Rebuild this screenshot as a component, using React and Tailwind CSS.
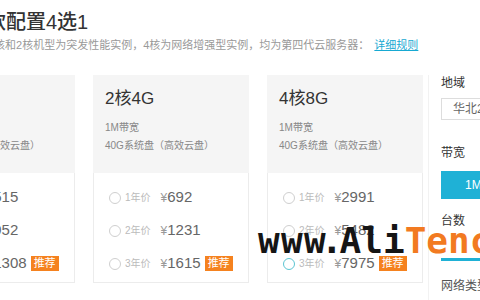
import React from 'react'

const cards = [
  { name: '1核2G', prices: ['515', '952', '1308'] },
  { name: '2核4G', prices: ['692', '1231', '1615'] },
  { name: '4核8G', prices: ['2991', '5482', '7975'], active: 2 },
]

const years = ['1年价', '2年价', '3年价']

const Card = ({ card }) => {
  return (
    <div className='w-[156px] shrink-0 flex flex-col'>
      <div className='bg-[#f5f5f5] h-[98px] px-[12px] pt-[12px]'>
        <p className='text-[17px] leading-[24px] text-[#333]'>{card.name}</p>
        <p className='mt-[9px] text-[10px] leading-[16px] text-[#888]'>1M带宽</p>
        <p className='mt-[2px] text-[10px] leading-[16px] text-[#888] whitespace-nowrap'>40G系统盘（高效云盘）</p>
      </div>
      <div className='h-[110px] border border-t-0 border-[#ececec] pt-[8px] pl-[15px]'>
        {card.prices.map((price, i) => (
          <div key={i} className='h-[33px] flex items-center whitespace-nowrap'>
            <span
              className={
                card.active === i
                  ? 'w-[12px] h-[12px] rounded-full border-[1.5px] border-[#5cc5d2]'
                  : 'w-[12px] h-[12px] rounded-full border border-[#cfcfcf]'
              }
            />
            <span className='ml-[4px] text-[10px] text-[#bbb]'>{years[i]}</span>
            <span className='ml-[10px] text-[12px] text-[#999]'>¥</span>
            <span className='text-[15px] text-[#666]'>{price}</span>
            {i === 2 && (
              <span className='ml-[4px] h-[15px] px-[3px] flex items-center bg-[#f5821f] text-white text-[11px]'>推荐</span>
            )}
          </div>
        ))}
      </div>
    </div>
  )
}

const App = () => {
  return (
    <div className="w-[480px] h-[300px] overflow-hidden bg-white relative font-['Liberation_Sans','Noto_Sans_CJK_SC',sans-serif]">
      <p className='ml-[-14px] pt-[8px] text-[20px] leading-[28px] text-[#333] font-medium whitespace-nowrap'>款配置4选1</p>
      <p className='ml-[-12px] mt-[1px] text-[11px] leading-[16px] text-[#999] whitespace-nowrap'>
        1核和2核机型为突发性能实例，4核为网络增强型实例，均为第四代云服务器：
        <span className='ml-[5px] text-[#17a9d2] underline'>详细规则</span>
      </p>

      <div className='mt-[22px] flex'>
        <div className='ml-[-81px] flex gap-[18px]'>
          {cards.map((card) => (
            <Card key={card.name} card={card} />
          ))}
        </div>
        <div className='ml-[5px] border-l border-[#f2f2f2] pl-[12px] h-[225px] shrink-0 w-[80px]'>
          <p className='text-[12px] leading-[16px] text-[#333]'>地域</p>
          <div className='mt-[7px] h-[22px] w-[80px] border border-[#ddd] pl-[11px] flex items-center text-[12px] text-[#666]'>华北2</div>
          <p className='mt-[25px] text-[12px] leading-[16px] text-[#333]'>带宽</p>
          <div className='mt-[10px] h-[28px] w-[80px] bg-[#1fb1d6] pl-[24px] flex items-center text-[12px] text-white'>1M</div>
          <p className='mt-[14px] text-[12px] leading-[16px] text-[#333]'>台数</p>
          <div className='mt-[6px] h-[26px] w-[80px] border-b-[3px] border-[#1fb1d6]' />
          <p className='mt-[17px] text-[12px] leading-[16px] text-[#555] whitespace-nowrap'>网络类型</p>
        </div>
      </div>

      {/* watermark */}
      <div className="absolute left-[258px] top-[223px] flex font-['DejaVu_Sans_Mono',monospace] font-bold text-[36px] leading-[36px] whitespace-nowrap">
        <span className='text-[#151515] tracking-[1.3px]'>www</span>
        <span className='text-[#151515] ml-[-6px] mr-[-3px]'>.</span>
        <span className='text-[#151515]'>Ali</span>
        <span className='text-[#f27a21]'>Tenc</span>
      </div>
    </div>
  )
}

export default App
